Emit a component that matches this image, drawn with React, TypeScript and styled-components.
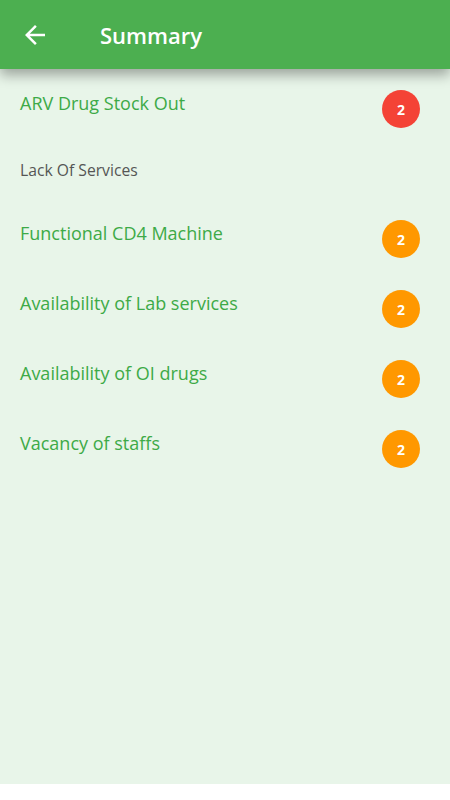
import styled, { createGlobalStyle } from "styled-components";

type Item = { title: string; count?: number; tone?: "red" | "orange"; header?: boolean };

const items: Item[] = [
  { title: "ARV Drug Stock Out", count: 2, tone: "red" },
  { title: "Lack Of Services", header: true },
  { title: "Functional CD4 Machine", count: 2, tone: "orange" },
  { title: "Availability of Lab services", count: 2, tone: "orange" },
  { title: "Availability of OI drugs", count: 2, tone: "orange" },
  { title: "Vacancy of staffs", count: 2, tone: "orange" },
];

const GlobalStyle = createGlobalStyle`
  body {
    margin: 0;
    background: #ffffff;
    font-family: "Open Sans", "Noto Sans", sans-serif;
  }
`;

const Screen = styled.div`
  width: 450px;
  height: 784px;
  background: #e8f5e9;
  display: flex;
  flex-direction: column;
`;

const Toolbar = styled.header`
  height: 69px;
  background: #4caf50;
  display: flex;
  align-items: center;
  box-shadow: 0 6px 12px rgba(0, 0, 0, 0.33);
  position: relative;
  z-index: 1;
`;

const BackButton = styled.button`
  width: 30px;
  height: 30px;
  margin-left: 20px;
  padding: 0;
  border: none;
  background: none;
  display: flex;
`;

const Title = styled.h1`
  margin: 0 0 0 50px;
  color: #ffffff;
  font-size: 22px;
  font-weight: 600;
  line-height: 30px;
`;

const List = styled.ul`
  list-style: none;
  margin: 0;
  padding: 10px 0 0;
`;

const Row = styled.li<{ $header?: boolean }>`
  display: flex;
  align-items: flex-start;
  justify-content: space-between;
  height: ${({ $header }) => ($header ? "60px" : "70px")};
  padding: 10px 30px 0 20px;
  box-sizing: border-box;
`;

const Label = styled.span<{ $header?: boolean }>`
  margin-top: ${({ $header }) => ($header ? "0" : "2px")};
  color: ${({ $header }) => ($header ? "#555555" : "#3daa47")};
  font-size: ${({ $header }) => ($header ? "15.7px" : "18px")};
  line-height: ${({ $header }) => ($header ? "22px" : "24px")};
`;

const Badge = styled.span<{ $tone: "red" | "orange" }>`
  width: 38px;
  height: 38px;
  margin-top: 1px;
  border-radius: 50%;
  background: ${({ $tone }) => ($tone === "red" ? "#f44336" : "#ff9800")};
  color: #ffffff;
  font-size: 14px;
  font-weight: 700;
  display: flex;
  align-items: center;
  justify-content: center;
`;

export default function App() {
  return (
    <>
      <GlobalStyle />
      <Screen>
        <Toolbar>
          <BackButton aria-label="Back">
            <svg width="30" height="30" viewBox="0 0 24 24" fill="#ffffff">
              <path d="M20 11H7.83l5.59-5.59L12 4l-8 8 8 8 1.41-1.41L7.83 13H20v-2z" />
            </svg>
          </BackButton>
          <Title>Summary</Title>
        </Toolbar>
        <List>
          {items.map((item) => (
            <Row key={item.title} $header={item.header}>
              <Label $header={item.header}>{item.title}</Label>
              {item.count !== undefined && item.tone && (
                <Badge $tone={item.tone}>{item.count}</Badge>
              )}
            </Row>
          ))}
        </List>
      </Screen>
    </>
  );
}
